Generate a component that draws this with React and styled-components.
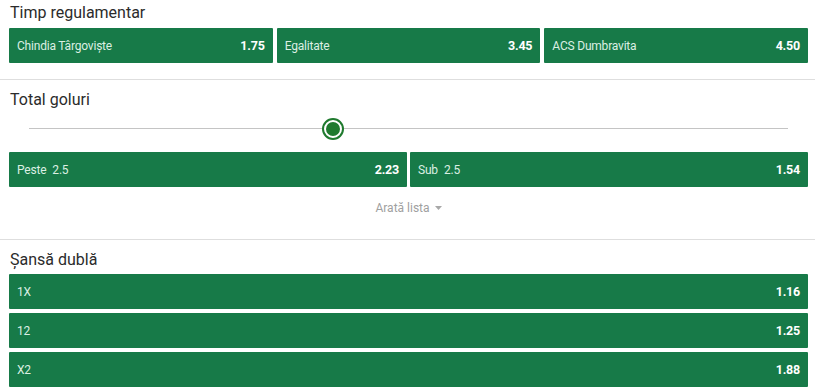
import React from "react";
import styled, { createGlobalStyle } from "styled-components";

const Global = createGlobalStyle`
  html, body { margin: 0; padding: 0; background: #fff; }
  body { font-family: Roboto, "Noto Sans", Arial, sans-serif; }
  * { box-sizing: border-box; }
`;

const Page = styled.div`
  width: 815px;
  background: #fff;
`;

const Section = styled.section`
  padding: ${(p) => p.$pt}px 7px ${(p) => p.$pb}px 9px;
  border-bottom: ${(p) => (p.$last ? "none" : "1px solid #dedede")};
`;

const Title = styled.h2`
  margin: 0 0 ${(p) => p.$mb}px 1px;
  font-size: 16px;
  line-height: 20px;
  font-weight: 400;
  color: #2b2b2b;
`;

const Row = styled.div`
  display: grid;
  grid-template-columns: repeat(${(p) => p.$cols}, 1fr);
  gap: ${(p) => p.$gap}px;
`;

const Stack = styled.div`
  display: flex;
  flex-direction: column;
  gap: 4px;
`;

const OddButton = styled.button`
  display: flex;
  align-items: center;
  justify-content: space-between;
  height: 35px;
  padding: 0 8px;
  border: none;
  border-radius: 1px;
  background: #177a48;
  font-family: inherit;
  cursor: pointer;
`;

const Label = styled.span`
  display: flex;
  gap: 6px;
  font-size: 12px;
  color: #dcefe3;
  letter-spacing: -0.2px;
`;

const Odd = styled.span`
  font-size: 12.5px;
  font-weight: 700;
  color: #fff;
  letter-spacing: -0.2px;
`;

const SliderWrap = styled.div`
  position: relative;
  height: 22px;
  margin: 8px 20px 12px 20px;
`;

const Track = styled.div`
  position: absolute;
  left: 0;
  right: 0;
  top: 10px;
  height: 1px;
  background: #c4c4c4;
`;

const Knob = styled.div`
  position: absolute;
  top: 0;
  width: 22px;
  height: 22px;
  margin-left: -11px;
  border-radius: 50%;
  border: 2px solid #1f7a2e;
  background: #fff;
  display: flex;
  align-items: center;
  justify-content: center;
  &::after {
    content: "";
    width: 14px;
    height: 14px;
    border-radius: 50%;
    background: #1f7a2e;
  }
`;

const ShowList = styled.button`
  display: flex;
  align-items: center;
  justify-content: center;
  gap: 5px;
  width: 100%;
  margin-top: 11px;
  height: 20px;
  border: none;
  background: none;
  font-family: inherit;
  font-size: 12px;
  color: #a0a0a0;
  cursor: pointer;
`;

const Bet = ({ label, extra, odd }) => (
  <OddButton>
    <Label>
      <span>{label}</span>
      {extra && <span>{extra}</span>}
    </Label>
    <Odd>{odd}</Odd>
  </OddButton>
);

export default function App() {
  return (
    <Page>
      <Global />
      <Section $pt={3} $pb={16}>
        <Title $mb={5}>Timp regulamentar</Title>
        <Row $cols={3} $gap={4}>
          <Bet label="Chindia Târgoviște" odd="1.75" />
          <Bet label="Egalitate" odd="3.45" />
          <Bet label="ACS Dumbravita" odd="4.50" />
        </Row>
      </Section>
      <Section $pt={10} $pb={21}>
        <Title $mb={0}>Total goluri</Title>
        <SliderWrap>
          <Track />
          <Knob style={{ left: "40%" }} />
        </SliderWrap>
        <Row $cols={2} $gap={3}>
          <Bet label="Peste" extra="2.5" odd="2.23" />
          <Bet label="Sub" extra="2.5" odd="1.54" />
        </Row>
        <ShowList>
          Arată lista
          <svg width="7" height="4" viewBox="0 0 7 4">
            <path d="M0 0 L7 0 L3.5 4 Z" fill="#a8a8a8" />
          </svg>
        </ShowList>
      </Section>
      <Section $pt={10} $pb={0} $last>
        <Title $mb={4}>Șansă dublă</Title>
        <Stack>
          <Bet label="1X" odd="1.16" />
          <Bet label="12" odd="1.25" />
          <Bet label="X2" odd="1.88" />
        </Stack>
      </Section>
    </Page>
  );
}
